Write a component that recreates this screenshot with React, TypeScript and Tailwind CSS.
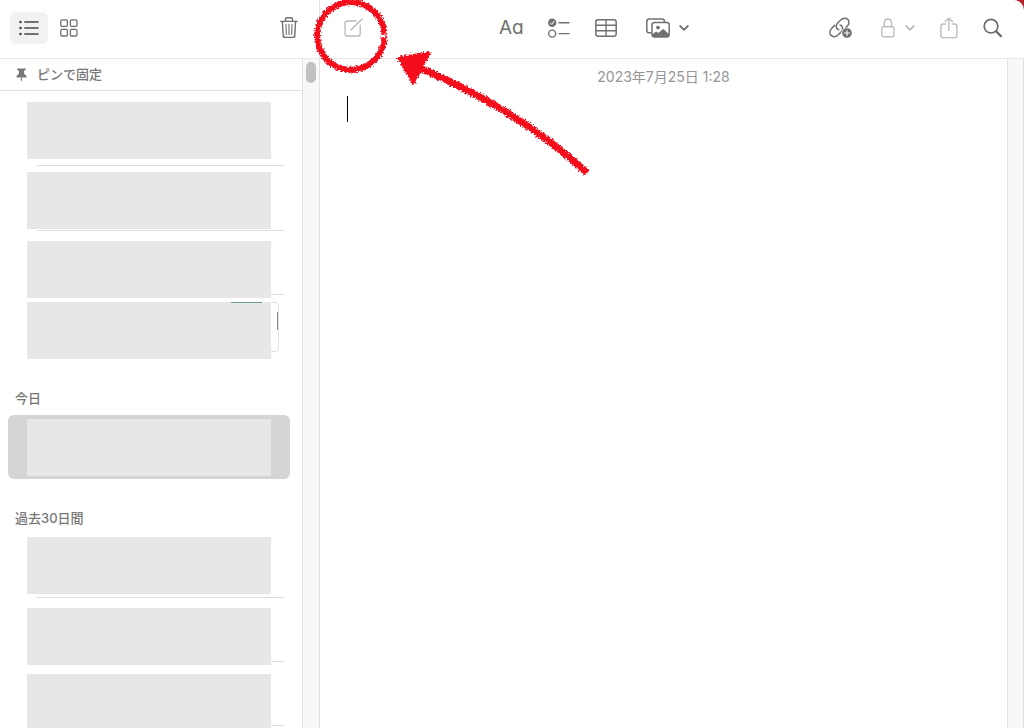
import React from 'react'

type NoteRow = { id: number; height: string; offset: string; divider: boolean; preview?: boolean };

const pinnedNotes: NoteRow[] = [
    { id: 1, height: 'h-16', offset: 'mt-0', divider: true },
    { id: 2, height: 'h-[65px]', offset: 'mt-[6px]', divider: true },
    { id: 3, height: 'h-16', offset: 'mt-[10px]', divider: true },
    { id: 4, height: 'h-16', offset: 'mt-[7px]', divider: false, preview: true },
];

const olderNotes: NoteRow[] = [
    { id: 5, height: 'h-[61px]', offset: 'mt-0', divider: true },
    { id: 6, height: 'h-16', offset: 'mt-[10px]', divider: true },
    { id: 7, height: 'h-16', offset: 'mt-[12px]', divider: true },
];

const ListIcon = () => (
    <svg width="20" height="16" viewBox="0 0 20 16" fill="none" stroke="#4a4a4a" strokeWidth="1.6" strokeLinecap="round">
        <path d="M5.8 2H19M5.8 8H19M5.8 14H19" />
        <g fill="#4a4a4a" stroke="none">
            <circle cx="1.5" cy="2" r="1.3" />
            <circle cx="1.5" cy="8" r="1.3" />
            <circle cx="1.5" cy="14" r="1.3" />
        </g>
    </svg>
)

const GridIcon = () => (
    <svg width="18" height="18" viewBox="0 0 18 18" fill="none" stroke="#6f6f6f" strokeWidth="1.3">
        <rect x="0.8" y="0.8" width="6.6" height="6.6" rx="1.3" />
        <rect x="10.4" y="0.8" width="6.6" height="6.6" rx="1.3" />
        <rect x="0.8" y="10.4" width="6.6" height="6.6" rx="1.3" />
        <rect x="10.4" y="10.4" width="6.6" height="6.6" rx="1.3" />
    </svg>
)

const TrashIcon = () => (
    <svg width="18" height="22" viewBox="0 0 18 22" fill="none" stroke="#6f6f6f" strokeWidth="1.4" strokeLinecap="round" strokeLinejoin="round">
        <path d="M0.8 4.4H17.2M5.5 4.2V2Q5.5 0.8 7 0.8H11Q12.5 0.8 12.5 2V4.2" />
        <path d="M2.4 4.4L3.2 18.4Q3.3 20.4 5.2 20.4H12.8Q14.7 20.4 14.8 18.4L15.6 4.4" />
        <path d="M6 7.4L6.3 17.4M9 7.4V17.4M12 7.4L11.7 17.4" strokeWidth="1.1" />
    </svg>
)

const ComposeIcon = () => (
    <svg width="20" height="20" viewBox="0 0 20 20" fill="none" stroke="#b9b9b9" strokeWidth="1.3" strokeLinecap="round">
        <path d="M12.2 3H3.2Q1 3 1 5.2V15.8Q1 18 3.2 18H14Q16.2 18 16.2 15.8V7.2" />
        <path d="M7.2 11.8L16.3 2.7M17.4 1.7L18 1.1" strokeWidth="1.5" />
    </svg>
)

const ChecklistIcon = () => (
    <svg width="22" height="20" viewBox="0 0 22 20" fill="none" stroke="#707070" strokeWidth="1.4" strokeLinecap="round" strokeLinejoin="round">
        <circle cx="4.2" cy="4.8" r="4.2" fill="#707070" stroke="none" />
        <path d="M2.4 5L3.8 6.5L6.1 3.2" stroke="#fff" strokeWidth="1" />
        <circle cx="4.2" cy="15.6" r="3.5" />
        <path d="M11 4.8H21M11 15.6H21" />
    </svg>
)

const TableIcon = () => (
    <svg width="22" height="18" viewBox="0 0 22 18" fill="none" stroke="#707070" strokeWidth="1.5">
        <rect x="0.8" y="0.8" width="20.4" height="16.4" rx="2.4" />
        <path d="M0.8 6.3H21.2M0.8 11.7H21.2M11 0.8V17.2" strokeWidth="1.4" />
    </svg>
)

const PhotosIcon = () => (
    <svg width="24" height="20" viewBox="0 0 24 20" fill="none" stroke="#707070" strokeWidth="1.5">
        <path d="M5.5 14.8H3.2Q0.8 14.8 0.8 12.4V3.4Q0.8 1 3.2 1H16Q18.4 1 18.4 3.2V4.2" />
        <rect x="6" y="4.6" width="17.2" height="14.4" rx="2.4" />
        <circle cx="12" cy="9.6" r="1.9" fill="#707070" stroke="none" />
        <path d="M6.2 16.6L9.6 13.8Q10.3 13.3 11 13.9L12.4 15.1L16.2 11.6Q17.1 10.9 18 11.6L23 16.2V17Q23 19 21 19H8.2Q6.2 19 6.2 17Z" fill="#707070" stroke="none" />
    </svg>
)

const ChevronIcon = ({ color }: { color: string }) => (
    <svg width="10" height="6" viewBox="0 0 10 6" fill="none" stroke={color} strokeWidth="1.8" strokeLinecap="round" strokeLinejoin="round">
        <path d="M1.2 1L5 4.8L8.8 1" />
    </svg>
)

const LinkIcon = () => (
    <svg width="24" height="22" viewBox="0 0 24 22" fill="none" stroke="#707070" strokeWidth="1.5" strokeLinecap="round">
        <path d="M5.6 8.4L2.8 11.2C0.4 13.6 0.4 16.7 2.1 18.4C3.9 20.2 7 20.1 9.3 17.8L12 15.1C13.9 13.2 14 10.6 12.5 8.8Q11.9 8.1 11.1 7.9" />
        <path d="M9.8 12.7C8.1 12.3 7 10.6 7.2 8.7Q7.4 7.3 8.9 5.8L11.7 3C14 0.8 17.1 0.6 18.8 2.4C20.6 4.2 20.3 7.2 18.1 9.4L16.4 11.1" />
        <circle cx="18" cy="16" r="5.6" fill="#fff" stroke="none" />
        <circle cx="18" cy="16" r="4.8" fill="#707070" stroke="none" />
        <path d="M18 13.5V18.5M15.5 16H20.5" stroke="#fff" strokeWidth="1.1" />
    </svg>
)

const LockIcon = () => (
    <svg width="14" height="20" viewBox="0 0 14 20" fill="none" stroke="#bdbdbd" strokeWidth="1.4">
        <rect x="0.8" y="8.8" width="12.2" height="10" rx="1.8" />
        <path d="M3.2 8.8V5.2C3.2 2.4 4.8 1 6.9 1C9 1 10.6 2.4 10.6 5.2V8.8" />
    </svg>
)

const ShareIcon = () => (
    <svg width="18" height="22" viewBox="0 0 18 22" fill="none" stroke="#bdbdbd" strokeWidth="1.4" strokeLinecap="round" strokeLinejoin="round">
        <path d="M5.6 7H3.2Q0.9 7 0.9 9.2V18.4Q0.9 20.6 3.2 20.6H14.6Q16.9 20.6 16.9 18.4V9.2Q16.9 7 14.6 7H12.2" />
        <path d="M8.9 13.2V1.1M5.4 4.4L8.9 0.9L12.4 4.4" />
    </svg>
)

const SearchIcon = () => (
    <svg width="20" height="20" viewBox="0 0 20 20" fill="none" stroke="#6a6a6a" strokeWidth="1.7" strokeLinecap="round">
        <circle cx="8" cy="8.2" r="6.8" />
        <path d="M13.2 13.4L18 18.2" strokeWidth="2.2" />
    </svg>
)

const PinIcon = () => (
    <svg width="11" height="14" viewBox="0 0 11 14" fill="#777">
        <path d="M1.6 0.5H9.4Q10 0.5 10 1.1Q10 2.1 7.9 3L8.2 6Q10.5 7.2 10.6 8.9Q10.6 9.4 10 9.4H1Q0.4 9.4 0.4 8.9Q0.5 7.2 2.8 6L3.1 3Q1 2.1 1 1.1Q1 0.5 1.6 0.5Z" />
        <path d="M4.9 9.4H6.1V12L5.5 13.8L4.9 12Z" />
    </svg>
)

const NoteItem = ({ note }: { note: NoteRow }) => (
    <li className={`grid grid-rows-[minmax(0,1fr)] ${note.height}`}>
        {note.divider && (
            <div className="col-start-1 row-start-1 self-end ml-[37px] mr-[18px] h-px bg-[#dedede]" />
        )}
        {note.preview && (
            <div className="col-start-1 row-start-1 mt-[7px] ml-[231px] mr-[23px] flex h-[50px] items-start justify-end rounded-sm border border-[#e2e2e2]">
                <div className="mt-[9px] h-[18px] w-px bg-[#8a8a8a]" />
            </div>
        )}
        <div className={`col-start-1 row-start-1 ml-[27px] mr-[31px] h-[57px] bg-[#e7e7e7] ${note.offset}`}>
            {note.preview && <div className="mr-[9px] ml-auto h-px w-[31px] bg-[#67a085]" />}
        </div>
    </li>
)

const Sidebar = () => (
    <aside className="flex w-[320px] shrink-0 flex-col border-r border-[#e2e2e2]">
        <div className="flex h-[59px] shrink-0 items-center border-b border-[#e8e8e8] pb-[2px] pl-[10px] pr-[21px]">
            <button aria-label="リスト表示" className="flex h-8 w-[38px] items-center justify-center rounded-md bg-[#f2f2f2]">
                <ListIcon />
            </button>
            <button aria-label="ギャラリー表示" className="ml-3">
                <GridIcon />
            </button>
            <button aria-label="削除" className="ml-auto">
                <TrashIcon />
            </button>
        </div>
        <div className="flex min-h-0 flex-1">
            <div className="min-w-0 flex-1 overflow-hidden">
                <h2 className="flex h-8 items-center gap-[10px] border-b border-[#e2e2e2] pl-4 font-medium">
                    <PinIcon />
                    ピンで固定
                </h2>
                <ul className="pt-[11px]">
                    {pinnedNotes.map((note) => <NoteItem key={note.id} note={note} />)}
                </ul>
                <h2 className="mt-[29px] pl-[15px] font-medium leading-5">今日</h2>
                <div className="mt-[7px] ml-2 mr-3 h-16 rounded-md bg-[#d5d5d5] px-[19px] pt-1">
                    <div className="h-[57px] bg-[#e7e7e7]" />
                </div>
                <h2 className="mt-[29px] pl-[15px] font-medium leading-5">過去30日間</h2>
                <ul className="pt-[9px]">
                    {olderNotes.map((note) => <NoteItem key={note.id} note={note} />)}
                </ul>
            </div>
            <div className="w-[17px] shrink-0 border-l border-[#e2e2e2] bg-[#f8f8f8] pt-[3px] pl-[3px]">
                <div className="h-[21px] w-[10px] rounded-full bg-[#c1c1c1]" />
            </div>
        </div>
    </aside>
)

const Editor = () => (
    <main className="flex min-w-0 flex-1 flex-col">
        <div className="flex h-[59px] shrink-0 items-center border-b border-[#e8e8e8] pb-[2px] pl-6 pr-[21px]">
            <button aria-label="新規メモ"><ComposeIcon /></button>
            <div className="ml-[135px] flex items-center gap-[25px] text-[#707070]">
                <button aria-label="フォーマット" className="w-6 text-[19px] leading-6 [font-feature-settings:'cv11']">Aa</button>
                <button aria-label="チェックリスト"><ChecklistIcon /></button>
                <button aria-label="表"><TableIcon /></button>
                <button aria-label="メディア" className="ml-1 flex items-center gap-[9px]">
                    <PhotosIcon />
                    <ChevronIcon color="#707070" />
                </button>
            </div>
            <div className="ml-auto flex items-center">
                <button aria-label="リンクを追加"><LinkIcon /></button>
                <button aria-label="ロック" className="ml-7 flex items-center gap-[10px]">
                    <LockIcon />
                    <ChevronIcon color="#bdbdbd" />
                </button>
                <button aria-label="共有" className="ml-[25px]"><ShareIcon /></button>
                <button aria-label="検索" className="ml-[25px]"><SearchIcon /></button>
            </div>
        </div>
        <div className="flex min-h-0 flex-1">
            <div className="flex min-w-0 flex-1 flex-col">
                <p className="pt-2 text-center text-sm leading-5 text-[#969696]">2023年7月25日 1:28</p>
                <div className="mt-2 flex flex-1 pl-[27px]">
                    <span className="mt-[1px] h-[26px] w-px bg-black" />
                    <textarea aria-label="メモ本文" className="flex-1 resize-none px-2 text-lg outline-none" />
                </div>
            </div>
            <div className="w-[17px] shrink-0 border-x border-[#e2e2e2] bg-[#f8f8f8]" />
        </div>
    </main>
)

// crayon style circle and arrow that point at the compose button
const Annotation = () => (
    <svg className="pointer-events-none absolute top-0 left-0" width="600" height="190" viewBox="0 0 600 190" fill="none">
        <filter id="crayon" filterUnits="userSpaceOnUse" x="300" y="-10" width="300" height="200">
            <feTurbulence type="fractalNoise" baseFrequency="0.6" numOctaves="2" seed="4" />
            <feDisplacementMap in="SourceGraphic" scale="5" xChannelSelector="R" yChannelSelector="G" />
        </filter>
        <g filter="url(#crayon)" stroke="#f5101f">
            <path d="M384.4 34.6A33.6 33.8 0 1 0 384.4 37.2" strokeWidth="6" />
            <path d="M422 69C478 93 536 125 587 173" strokeWidth="7" />
            <path d="M398.5 58L429 53L413.5 83Z" fill="#f5101f" strokeWidth="3" strokeLinejoin="round" />
        </g>
    </svg>
)

const App = () => {
    return (
        <div className="relative h-screen bg-[#b5202b] text-[13px] text-[#777] font-[Inter,'Noto_Sans_CJK_JP',sans-serif]">
            <div className="flex h-full overflow-hidden rounded-tr-[10px] bg-white">
                <Sidebar />
                <Editor />
            </div>
            <Annotation />
        </div>
    )
}

export default App
